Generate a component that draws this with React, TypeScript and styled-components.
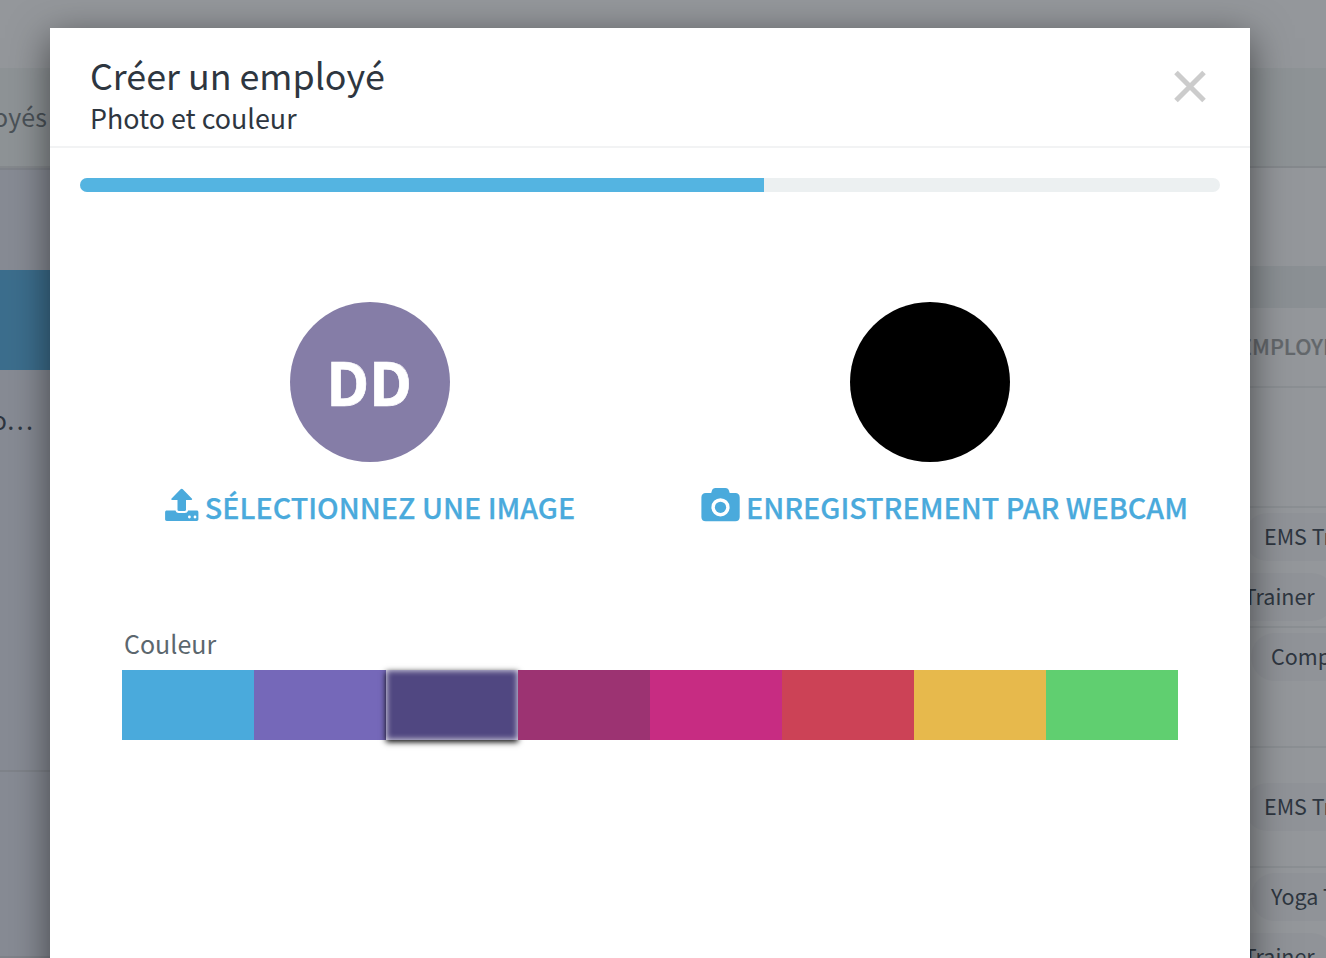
import React from "react";
import styled, { createGlobalStyle } from "styled-components";

const Global = createGlobalStyle`
  * { box-sizing: border-box; }
  html, body { margin: 0; padding: 0; overflow: hidden; }
  body { font-family: "Noto Sans CJK SC", "Open Sans", sans-serif; }
`;

const Page = styled.div`
  position: relative;
  display: flex;
  flex-direction: column;
  width: 1326px;
  height: 958px;
  overflow: hidden;
  background: #94979b;
  color: #2e3640;
`;

const TopBar = styled.div`
  flex: none;
  height: 68px;
`;

const Nav = styled.div`
  flex: none;
  display: flex;
  justify-content: space-between;
  height: 100px;
  background: #8e9396;
  border-bottom: 2px solid #85898d;
`;

const NavItem = styled.div`
  width: 47px;
  display: flex;
  justify-content: flex-end;
  font-size: 25px;
  line-height: 97px;
  letter-spacing: 0.1px;
  color: #4b5258;
  white-space: nowrap;
`;

const Body = styled.div`
  flex: 1;
  display: flex;
  min-height: 0;
`;

const Sidebar = styled.div`
  width: 100px;
  flex: none;
  background: #878b94;
  border-top: 2px solid #7f838a;
`;

const SidebarGap = styled.div`
  height: 100px;
`;

const SidebarActive = styled.div`
  height: 100px;
  background: #3c6e8d;
`;

const SidebarItem = styled.div`
  width: 33px;
  height: 100px;
  display: flex;
  justify-content: flex-end;
  font-size: 25px;
  line-height: 99px;
  white-space: nowrap;
`;

const SidebarSection = styled.div<{ $height: number }>`
  height: ${(p) => p.$height}px;
  border-bottom: 2px solid #7f838a;
`;

const Main = styled.div`
  flex: 1;
  display: flex;
  flex-direction: column;
`;

const MainGap = styled.div`
  flex: none;
  height: 98px;
`;

const FilterBar = styled.div`
  flex: none;
  height: 42px;
  background: #8b9094;
`;

const TableHead = styled.div`
  flex: none;
  height: 80px;
  padding-left: 1139px;
  border-bottom: 2px solid #8b8f93;
  font-size: 21.6px;
  font-weight: 500;
  line-height: 76px;
  -webkit-text-stroke: 0.2px currentColor;
  color: #63676b;
  white-space: nowrap;
`;

const TableRow = styled.div<{ $center?: boolean }>`
  flex: none;
  display: flex;
  flex-direction: column;
  justify-content: ${(p) => (p.$center ? "center" : "flex-start")};
  gap: 12px;
  height: 120px;
  padding: ${(p) => (p.$center ? "0" : "5px 0 0")};
  border-bottom: 2px solid #8b8f93;
`;

const Chip = styled.div<{ $start: number }>`
  flex: none;
  align-self: flex-start;
  height: 48px;
  margin-left: ${(p) => p.$start}px;
  padding: 0 20px;
  border-radius: 24px;
  background: #909398;
  font-size: 21.5px;
  line-height: 45px;
  white-space: nowrap;
`;

const Modal = styled.section`
  position: absolute;
  top: 28px;
  left: 50px;
  width: 1200px;
  height: 1000px;
  background: #fff;
  box-shadow: 0 10px 37px rgba(0, 0, 0, 0.53);
`;

const ModalHeader = styled.header`
  display: flex;
  justify-content: space-between;
  height: 120px;
  padding: 22px 42px 0 40px;
  border-bottom: 2px solid #f2f3f4;
`;

const Title = styled.h1`
  margin: 0;
  font-size: 35.8px;
  font-weight: 400;
  line-height: 48px;
`;

const Subtitle = styled.h2`
  margin: 0;
  font-size: 26.85px;
  font-weight: 400;
  line-height: 40px;
`;

const Close = styled.button`
  align-self: flex-start;
  display: flex;
  margin-top: 19px;
  padding: 0;
  border: 0;
  background: none;
`;

const Progress = styled.div`
  height: 14px;
  margin: 30px 30px 0;
  border-radius: 7px;
  overflow: hidden;
  background: #ecf0f1;
`;

const ProgressFill = styled.div`
  width: 60%;
  height: 100%;
  background: #54b4e1;
`;

const Choices = styled.div`
  display: grid;
  grid-template-columns: 1fr 1fr;
  padding: 110px 40px 0;
`;

const Choice = styled.div`
  display: flex;
  flex-direction: column;
  align-items: center;
`;

const Avatar = styled.div<{ $color: string }>`
  width: 160px;
  height: 160px;
  padding-right: 2px;
  border-radius: 50%;
  background: ${(p) => p.$color};
  color: #fff;
  font-size: 60px;
  font-weight: 700;
  line-height: 156px;
  text-align: center;
  -webkit-text-stroke: 0.7px currentColor;
`;

const Action = styled.button<{ $indent?: number }>`
  display: flex;
  align-items: flex-start;
  height: 46px;
  margin: 24px 0 0 ${(p) => p.$indent || 0}px;
  padding: 0;
  border: 0;
  background: none;
  color: #4aaadc;
  font-family: inherit;
  font-size: 28.7px;
  font-weight: 500;
  line-height: 42px;
  white-space: nowrap;
`;

const ActionLabel = styled.span`
  margin-left: 6px;
  -webkit-text-stroke: 0.25px currentColor;
`;

const ColorField = styled.div`
  padding: 95px 72px 0;
`;

const FieldLabel = styled.div`
  height: 43px;
  padding-left: 2px;
  font-size: 25px;
  line-height: 32px;
  color: #5c676e;
`;

const Palette = styled.div`
  display: flex;
  height: 70px;
`;

const Swatch = styled.div<{ $color: string; $selected?: boolean }>`
  flex: 1;
  background: ${(p) => p.$color};
  box-shadow: ${(p) =>
    p.$selected ? "0 2px 6px #000, inset 0 0 6px rgba(255,255,255,.95)" : "none"};
`;

const UploadIcon = () => (
  <svg width="34" height="36" viewBox="0 -1 34 36" fill="currentColor">
    <path d="M16.7 1.700c.5 0 .8.300 1.100.600l9 9.200c.700.700.300 1.500-.600 1.500H21v9.800c0 .700-.4 1.200-1.200 1.200h-6.100c-.8 0-1.200-.5-1.200-1.200v-9.800H7.200c-.9 0-1.300-.8-.6-1.500l9-9.200c.3-.3.6-.6 1.100-.6Z" />
    <path
      fillRule="evenodd"
      d="M1.800 23.500h8.700c.5 1.700 1.600 2.500 3.300 2.500h6c1.700 0 2.800-.8 3.300-2.500h8.600c1 0 1.700.7 1.700 1.700v7c0 1-.7 1.700-1.700 1.700H1.800c-1 0-1.700-.7-1.700-1.700v-7c0-1 .7-1.700 1.700-1.700Zm22.600 5.100a1.400 1.400 0 1 0 0 2.800 1.400 1.400 0 0 0 0-2.800Zm5.600 0a1.400 1.400 0 1 0 0 2.800 1.400 1.400 0 0 0 0-2.800Z"
    />
  </svg>
);

const CameraIcon = () => (
  <svg width="39" height="36" viewBox="0 0 39 36" fill="currentColor">
    <path
      fillRule="evenodd"
      d="M14.600 2h9.700c2.300 0 3.100.9 3.600 2.400l.8 2.600h5.600c2.800 0 4.400 1.700 4.400 4.500v19.400c0 2.800-1.600 4.400-4.400 4.400H4.800C2 35.300.4 33.700.4 30.900V11.500C.4 8.700 2 7 4.800 7h5.400l.8-2.600C11.500 2.900 12.300 2 14.600 2Zm4.900 10.200a9.100 9.100 0 1 0 0 18.200 9.100 9.100 0 0 0 0-18.200Z"
    />
    <circle cx="19.500" cy="21.300" r="5.600" />
  </svg>
);

const palette = [
  "#4aaadc",
  "#7568b9",
  "#504781",
  "#9c3372",
  "#c72c82",
  "#cc4256",
  "#e7b94c",
  "#60cf70",
];

export default function App() {
  return (
    <>
      <Global />
      <Page>
        <TopBar />
        <Nav>
          <NavItem>Employés</NavItem>
        </Nav>
        <Body>
          <Sidebar>
            <SidebarGap />
            <SidebarActive />
            <SidebarItem>Emplo…</SidebarItem>
            <SidebarSection $height={302} />
            <SidebarSection $height={186} />
          </Sidebar>
          <Main>
            <MainGap />
            <FilterBar />
            <TableHead>EMPLOYÉ</TableHead>
            <TableRow />
            <TableRow>
              <Chip $start={1144}>EMS Trainer</Chip>
              <Chip $start={1076}>EMS Trainer</Chip>
            </TableRow>
            <TableRow>
              <Chip $start={1151}>Compta</Chip>
            </TableRow>
            <TableRow $center>
              <Chip $start={1144}>EMS Trainer</Chip>
            </TableRow>
            <TableRow>
              <Chip $start={1151}>Yoga Trainer</Chip>
              <Chip $start={1076}>EMS Trainer</Chip>
            </TableRow>
          </Main>
        </Body>

        <Modal>
          <ModalHeader>
            <div>
              <Title>Créer un employé</Title>
              <Subtitle>Photo et couleur</Subtitle>
            </div>
            <Close aria-label="Fermer">
              <svg width="36" height="36" viewBox="0 0 36 36" stroke="#ccc" strokeWidth="5">
                <path d="M4 3.500L32 31.500M32 3.500L4 31.500" />
              </svg>
            </Close>
          </ModalHeader>
          <Progress>
            <ProgressFill />
          </Progress>
          <Choices>
            <Choice>
              <Avatar $color="#857da7">DD</Avatar>
              <Action>
                <UploadIcon />
                <ActionLabel>SÉLECTIONNEZ UNE IMAGE</ActionLabel>
              </Action>
            </Choice>
            <Choice>
              <Avatar $color="#000" />
              <Action $indent={29}>
                <CameraIcon />
                <ActionLabel>ENREGISTREMENT PAR WEBCAM</ActionLabel>
              </Action>
            </Choice>
          </Choices>
          <ColorField>
            <FieldLabel>Couleur</FieldLabel>
            <Palette>
              {palette.map((color, i) => (
                <Swatch key={color} $color={color} $selected={i === 2} />
              ))}
            </Palette>
          </ColorField>
        </Modal>
      </Page>
    </>
  );
}
